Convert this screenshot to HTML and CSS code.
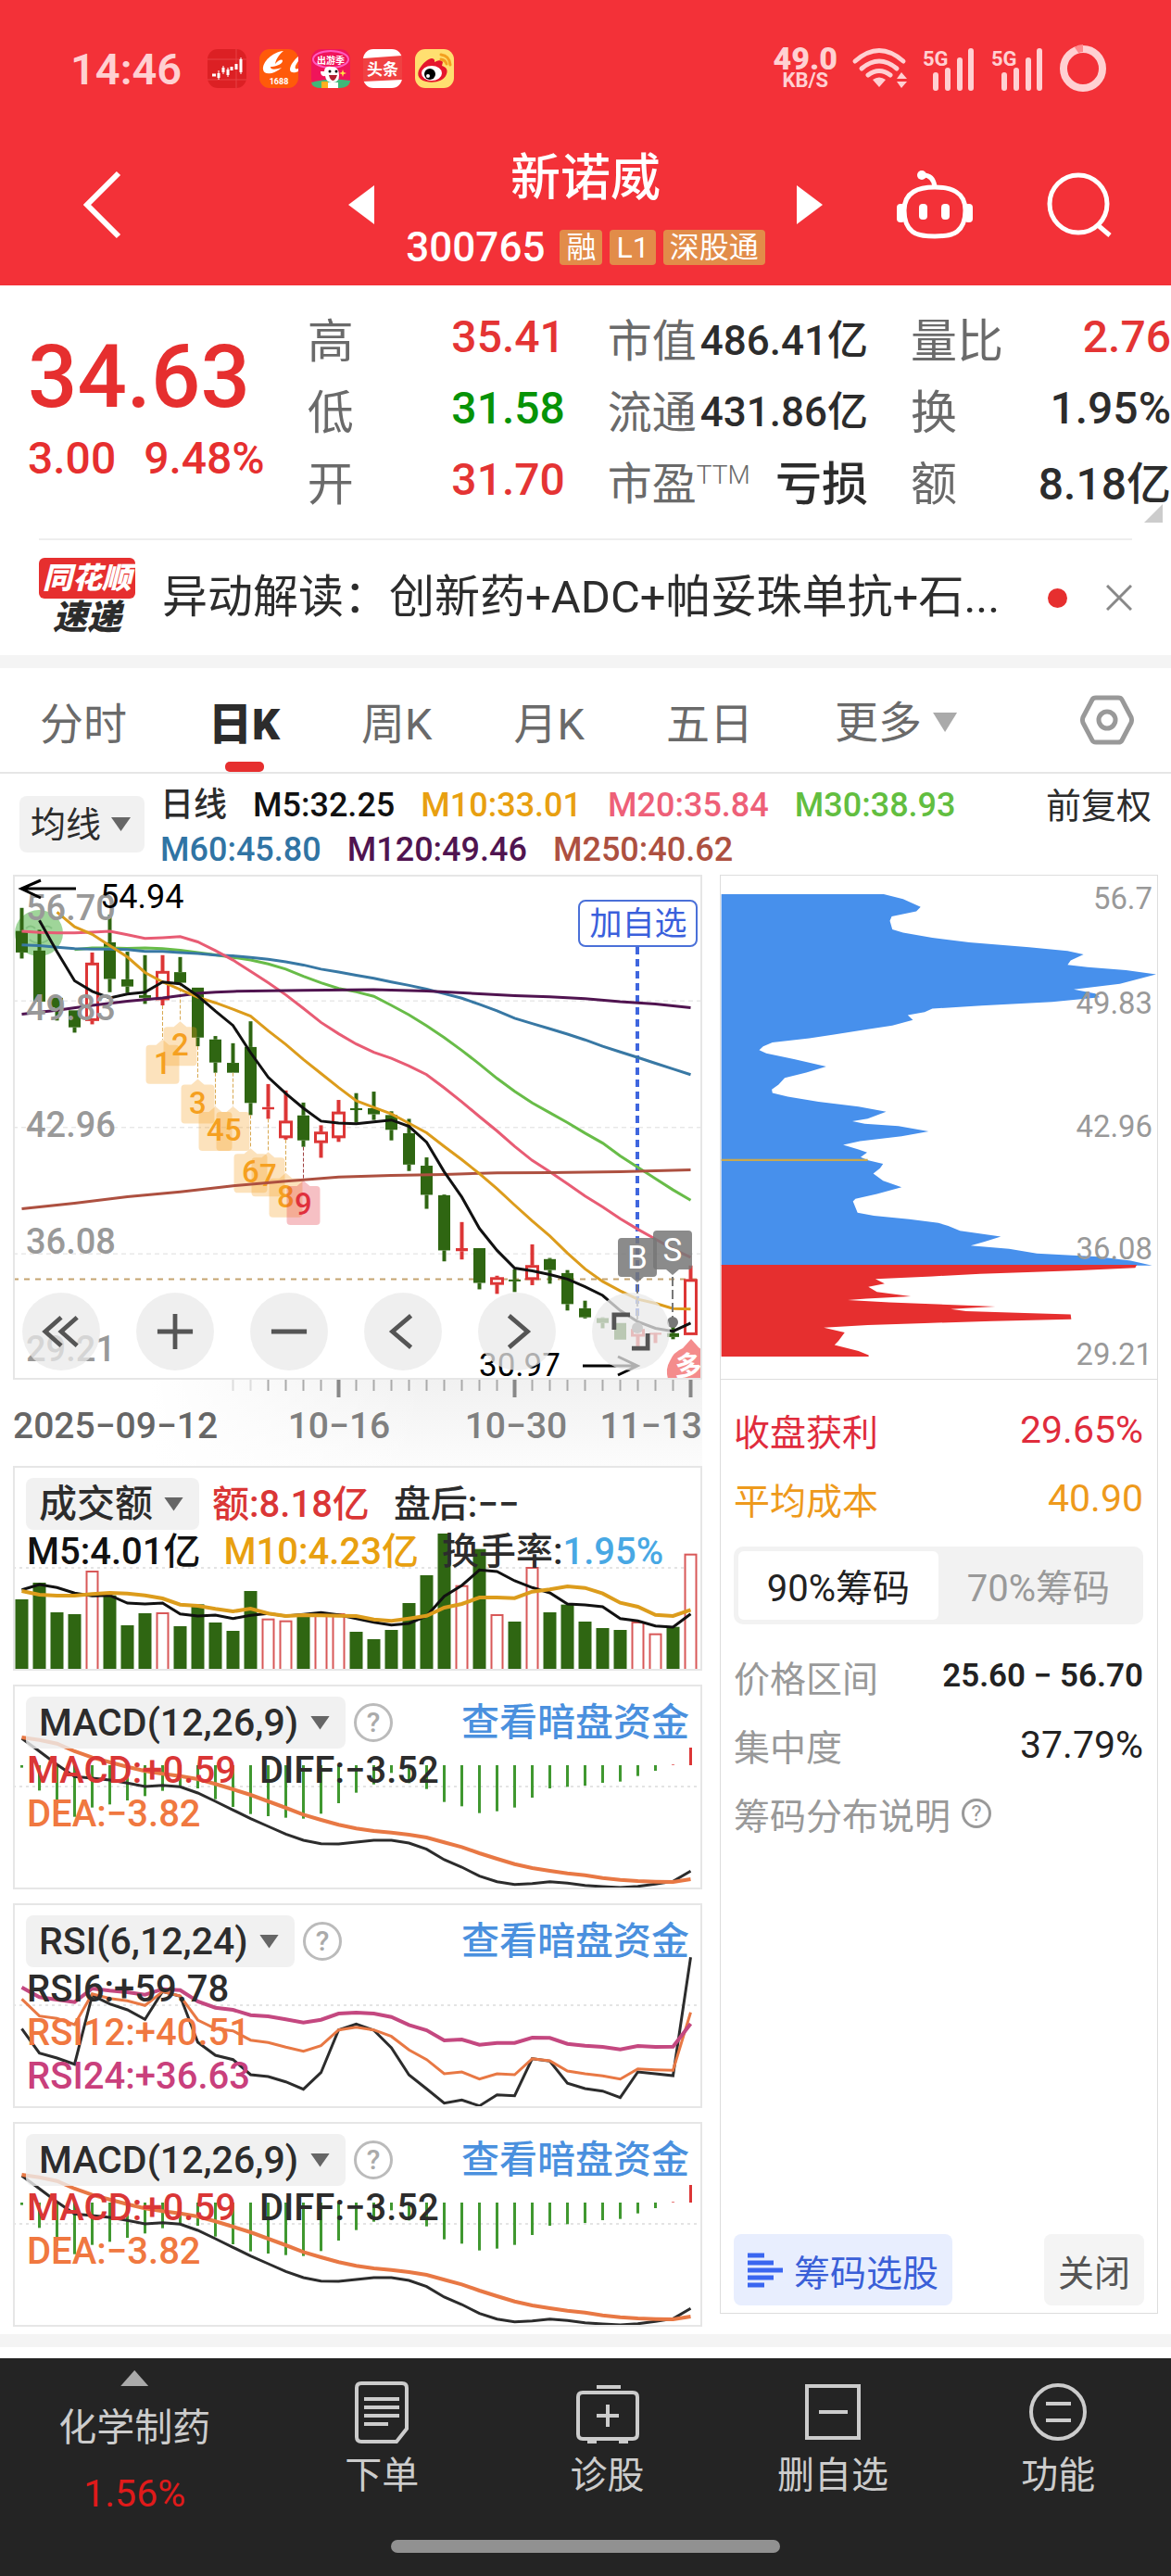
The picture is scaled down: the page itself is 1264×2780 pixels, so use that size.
FILE: index.html
```html
<!DOCTYPE html>
<html lang="zh-CN">
<head>
  <meta charset="UTF-8" />
  <title>新诺威 300765</title>
  <meta name="viewport" content="width=device-width, initial-scale=1" />
  <link rel="stylesheet" href="styles.css">
</head>
<body>

  <header class="header">
    <div class="status">
      <span class="clock">14:46</span>
      <div class="apps">
        <svg viewBox="0 0 42 42"><rect width="42" height="42" rx="11" fill="#dc2024"/><path d="M0 11h42M31 0v42M0 33h42" stroke="#e84044"/><path d="M5 28h4M12 26v5M17 20v5M22 22v6M26 19v4M31 16v6M36 11v14" stroke="#fff" stroke-width="3"/><path d="M12 23v10M17 18v9M22 20v10M36 9v18" stroke="#fff"/></svg>
        <svg viewBox="0 0 42 42"><rect width="42" height="42" rx="11" fill="#ff5a0a"/><path d="M26 2C14 3 3 14 4 22c1 7 12 5 20-2-6 2-12 3-12-1 4 0 12-2 13-6 0-3-5-1-8 3 1-6 6-12 9-14zM42 8c-5 4-9 10-9 14 0 4 5 4 9 2v-3c-3 1-4 0-3-3 1-2 2-4 3-5z" fill="#fff"/><text x="21" y="38" font-size="9" font-weight="700" text-anchor="middle" fill="#fff">1688</text></svg>
        <svg viewBox="0 0 42 42"><rect width="42" height="42" rx="11" fill="#f0145a"/><path d="M0 36q20-6 42-2v1q-2 7-11 7H11q-10 0-11-6z" fill="#3fb878"/><ellipse cx="21" cy="11" rx="19" ry="9" fill="none" stroke="#ff5cc0" stroke-width="2"/><text x="21" y="16" font-size="10" font-weight="700" text-anchor="middle" fill="#fff">出游季</text><path d="M14 24q0-6 8-5 8 0 8 9t-8 8q-6 0-7-7-5 1-5-5z" fill="#fff"/><path d="M17 36h12v6H17z" fill="#fff"/><path d="M19 28h9q-2 6-5 6-3-1-4-6z" fill="#b02030"/><circle cx="20" cy="24" r="1.5"/><circle cx="27" cy="24" r="1.5"/><path d="M11 35h7v7h-7z" fill="#ffb020"/><path d="m34 22 1 3 3 1-3 1-1 3-1-3-3-1 3-1z" fill="#ffe040"/></svg>
        <svg viewBox="0 0 42 42"><rect width="42" height="42" rx="11" fill="#fff"/><path d="M0 10l42-3v26L0 35z" fill="#f04142"/><text x="21" y="28" font-size="17" font-weight="700" text-anchor="middle" fill="#fff">头条</text></svg>
        <svg viewBox="0 0 42 42"><rect width="42" height="42" rx="11" fill="#ffdf70"/><path d="M18 10c4 0 3 4 3 4s7-4 9 0l-1 4c4 1 7 4 5 9-3 8-14 10-22 8C2 33 1 25 7 18c3-4 8-8 11-8z" fill="#e6162d"/><ellipse cx="18" cy="26" rx="11" ry="8" fill="#fff"/><circle cx="16" cy="27" r="6"/><circle cx="14" cy="29" r="2" fill="#fff"/><path d="M28 6q9 1 10 11M28 11q5 1 6 5" fill="none" stroke="#f4a020" stroke-width="3" stroke-linecap="round"/></svg>
      </div>
      <div class="signals">
        <div class="speed"><b>49.0</b><span>KB/S</span></div>
        <svg class="wifi" viewBox="0 0 60 42"><g fill="none" stroke="#ffd0d2" stroke-width="5" stroke-linecap="round"><path d="M3 13q26-23 52 0M10 21q19-16 38 0M17 28q12-9 24 0"/></g><path d="M22 33q7-5 14 0l-7 8zM48 32l5-7 6 7zM48 35h11l-6 7z" fill="#ffd0d2"/></svg>
        <svg class="cell" viewBox="0 0 58 44"><text x="0" y="19" font-size="22" font-weight="700">5G</text><path d="M14 43V29M27 43V24M40 43V13M52 43V3" stroke="#ffd0d2" stroke-width="6" stroke-linecap="round"/></svg>
        <svg class="cell" viewBox="0 0 58 44"><text x="0" y="19" font-size="22" font-weight="700">5G</text><path d="M14 43V29M27 43V24M40 43V13M52 43V3" stroke="#ffd0d2" stroke-width="6" stroke-linecap="round"/></svg>
        <svg class="ring" viewBox="0 0 50 50"><circle cx="25" cy="25" r="21" fill="none" stroke="#ffd0d2" stroke-width="8"/><path d="M18 5q3-2 7-2" stroke="#ff8a8e" stroke-width="8" fill="none"/></svg>
      </div>
    </div>

    <nav class="titlebar">
      <button class="back" aria-label="返回"><svg viewBox="0 0 42 74"><path d="M38 3 4 37l34 34" fill="none" stroke="#fff" stroke-width="6"/></svg></button>
      <div class="stock">
        <button class="step" aria-label="上一只"><svg viewBox="0 0 28 42"><path d="M28 0v42L0 21z" fill="#fff"/></svg></button>
        <div class="name">
          <h1>新诺威</h1>
          <p class="code">300765 <span class="tag">融</span><span class="tag">L1</span><span class="tag">深股通</span></p>
        </div>
        <button class="step" aria-label="下一只"><svg viewBox="0 0 28 42"><path d="M0 0v42l28-21z" fill="#fff"/></svg></button>
      </div>
      <div class="tools">
        <button class="robot" aria-label="问财"><svg viewBox="0 0 82 76"><g fill="none" stroke="#fff" stroke-width="5"><path d="M41 19q15 0 23 5 10 6 10 20 0 16-9 23-6 5-24 5t-24-5Q8 60 8 44q0-14 10-20 8-5 23-5z"/><path d="M27 6q12-1 14 12"/></g><circle cx="27" cy="6" r="5" fill="#fff"/><rect x="0" y="37" width="9" height="20" rx="4" fill="#fff"/><rect x="73" y="37" width="9" height="20" rx="4" fill="#fff"/><rect x="24" y="37" width="9" height="17" rx="4" fill="#fff"/><rect x="48" y="37" width="9" height="17" rx="4" fill="#fff"/></svg></button>
        <button class="search" aria-label="搜索"><svg viewBox="0 0 70 70"><g fill="none" stroke="#fff" stroke-width="5"><circle cx="34" cy="34" r="31"/><path d="m55 57 13 11"/></g></svg></button>
      </div>
    </nav>
  </header>

  <section class="quote">
    <div class="price">
      <strong>34.63</strong>
      <p><span>3.00</span><span>9.48%</span></p>
    </div>
    <dl>
      <div><dt>高</dt><dd class="up">35.41</dd></div>
      <div><dt>低</dt><dd class="down">31.58</dd></div>
      <div><dt>开</dt><dd class="up">31.70</dd></div>
    </dl>
    <dl class="tight">
      <div><dt>市值</dt><dd>486.41亿</dd></div>
      <div><dt>流通</dt><dd>431.86亿</dd></div>
      <div><dt>市盈<sup>TTM</sup></dt><dd class="loss">亏损</dd></div>
    </dl>
    <dl>
      <div><dt>量比</dt><dd class="up">2.76</dd></div>
      <div><dt>换</dt><dd>1.95%</dd></div>
      <div><dt>额</dt><dd>8.18亿</dd></div>
    </dl>
    <i class="corner"></i>
  </section>

  <section class="news">
    <div class="newslogo"><span>同花顺</span><b>速递</b></div>
    <a href="#">异动解读：创新药+ADC+帕妥珠单抗+石...</a>
    <i class="dot"></i>
    <button aria-label="关闭"><svg viewBox="0 0 28 28"><path d="m1 1 26 26M27 1 1 27" stroke="#888" stroke-width="3"/></svg></button>
  </section>

  <nav class="tabs">
    <button>分时</button>
    <button class="active">日K</button>
    <button>周K</button>
    <button>月K</button>
    <button>五日</button>
    <label class="more"><select aria-label="更多周期"><option>更多</option></select></label>
    <button class="setting" aria-label="设置"><svg viewBox="0 0 58 54"><g fill="none" stroke="#999" stroke-width="5"><path d="M17 3h24q3 0 4 2l10 19q1 3 0 6L45 49q-1 2-4 2H17q-3 0-4-2L3 30q-1-3 0-6L13 5q1-2 4-2z"/><circle cx="29" cy="27" r="9"/></g></svg></button>
  </nav>

  <section class="legend">
    <label class="picker"><select aria-label="主图指标"><option>均线</option></select></label>
    <div class="ma">
      <p><span>日线</span><span class="m5">M5:32.25</span><span class="m10">M10:33.01</span><span class="m20">M20:35.84</span><span class="m30">M30:38.93</span></p>
      <p><span class="m60">M60:45.80</span><span class="m120">M120:49.46</span><span class="m250">M250:40.62</span></p>
    </div>
    <button>前复权</button>
  </section>

  <main class="charts">
    <div class="left">
      <div class="kline">
        <svg id="kline" viewBox="0 0 744 545"></svg>
        <div class="controls">
          <button aria-label="展开"><svg viewBox="0 0 44 44"><path d="M22 6 4 22l18 16M40 6 22 22l18 16"/></svg></button>
          <button aria-label="放大"><svg viewBox="0 0 44 44"><path d="M2 22h40M22 2v40"/></svg></button>
          <button aria-label="缩小"><svg viewBox="0 0 44 44"><path d="M2 22h40"/></svg></button>
          <button aria-label="左移"><svg viewBox="0 0 44 44"><path d="M31 4 10 22l21 18"/></svg></button>
          <button aria-label="右移"><svg viewBox="0 0 44 44"><path d="m13 4 21 18-21 18"/></svg></button>
          <button aria-label="全屏"><svg viewBox="0 0 44 44"><path d="M3 20V3h18M41 24v17H23"/></svg></button>
        </div>
      </div>
      <svg id="axis" class="axis" viewBox="0 0 744 93"></svg>

      <div class="panel">
        <svg id="volume" viewBox="0 0 744 221"></svg>
        <div class="info">
          <div class="row"><label class="picker"><select aria-label="副图一"><option>成交额</option></select></label><span class="red">额:8.18亿</span><span>盘后:−−</span></div>
          <p><span class="m5">M5:4.01亿</span><span class="m10">M10:4.23亿</span><span>换手率:<em>1.95%</em></span></p>
        </div>
      </div>

      <div class="panel">
        <svg class="macd" viewBox="0 0 744 221"></svg>
        <div class="info">
          <div class="row"><label class="picker"><select aria-label="副图二"><option>MACD(12,26,9)</option></select></label><button class="help">?</button><a href="#">查看暗盘资金</a></div>
          <p><span class="red">MACD:+0.59</span><span>DIFF:−3.52</span></p>
          <p><span class="orange">DEA:−3.82</span></p>
        </div>
      </div>

      <div class="panel">
        <svg id="rsi" viewBox="0 0 744 221"></svg>
        <div class="info">
          <div class="row"><label class="picker"><select aria-label="副图三"><option>RSI(6,12,24)</option></select></label><button class="help">?</button><a href="#">查看暗盘资金</a></div>
          <p><span>RSI6:+59.78</span></p>
          <p><span class="orange">RSI12:+40.51</span></p>
          <p><span class="pink">RSI24:+36.63</span></p>
        </div>
      </div>

      <div class="panel">
        <svg class="macd" viewBox="0 0 744 221"></svg>
        <div class="info">
          <div class="row"><label class="picker"><select aria-label="副图四"><option>MACD(12,26,9)</option></select></label><button class="help">?</button><a href="#">查看暗盘资金</a></div>
          <p><span class="red">MACD:+0.59</span><span>DIFF:−3.52</span></p>
          <p><span class="orange">DEA:−3.82</span></p>
        </div>
      </div>
    </div>

    <aside class="chips">
      <svg viewBox="0 0 473 545">
        <g transform="scale(.3333 .4082) translate(-52 -35)">
          <path fill="#4790ec" d="M54 84H582L645 97 702 118 688 130 608 143 602 155 610 178 645 186 740 200 860 212 1055 225 1180 235 1232 244 1190 260 1180 272 1245 278 1370 286 1468 297 1350 322 1200 337 1270 348 1285 358 1130 370 900 380 740 388 715 397 660 405 677 418 610 433 530 443 420 457 340 467 220 478 190 488 177 498 200 507 290 522 395 542 330 558 260 572 240 590 218 603 220 612 270 622 370 635 500 648 590 662 530 680 480 687 520 694 630 700 728 714 640 727 505 740 450 750 500 762 528 770 507 782 532 791 580 800 570 812 548 826 580 845 640 862 560 880 490 893 482 900 497 930 550 938 665 947 760 957 792 965 830 978 963 993 910 1007 865 1017 990 1026 1080 1038 1280 1047 1385 1057 1455 1070H54z"/>
          <path fill="#e62f2f" d="M54 1068H1405L1400 1076 1220 1083 1050 1088 895 1092 740 1099 555 1106 585 1118 532 1127 560 1140 670 1152 525 1158 465 1162 600 1168 945 1179 800 1186 850 1191 1040 1196 1190 1200 1192 1213 935 1218 715 1223 530 1228 387 1235 455 1248 435 1270 422 1281 500 1297 533 1308V1312H54z"/>
          <path d="M54 790H530" stroke="#c8a850" stroke-width="5"/>
        </g>
        <g class="scale" text-anchor="end">
          <text x="468" y="36">56.7</text><text x="468" y="150">49.83</text><text x="468" y="283">42.96</text><text x="468" y="416">36.08</text><text x="468" y="530">29.21</text>
        </g>
      </svg>
      <div class="chipinfo">
        <p class="profit"><span>收盘获利</span><span class="num">29.65%</span></p>
        <p class="cost"><span>平均成本</span><span class="num">40.90</span></p>
        <div class="segment"><button class="on">90%筹码</button><button>70%筹码</button></div>
        <p><span>价格区间</span><b>25.60 − 56.70</b></p>
        <p><span>集中度</span><span class="num dark">37.79%</span></p>
        <p class="explain"><span>筹码分布说明</span><button class="help">?</button></p>
      </div>
      <div class="chipfoot">
        <button class="pick"><svg viewBox="0 0 38 38"><path d="M0 3h18M0 11h28M0 19h38M0 27h28M0 35h18" stroke="#3a66f0" stroke-width="5"/></svg>筹码选股</button>
        <button class="close">关闭</button>
      </div>
    </aside>
  </main>

  <div class="strip"></div>

  <footer class="bottom">
    <nav>
      <a class="sector" href="#"><i></i><span>化学制药</span><b>1.56%</b></a>
      <a href="#"><svg viewBox="0 0 70 70"><g fill="none" stroke="#ccc" stroke-width="4"><path d="M13 4h44q5 0 5 5v44L51 67H13q-5 0-5-5V9q0-5 5-5z"/><path d="M16 21h38M16 30h38M16 39h38M16 48h26"/></g></svg>下单</a>
      <a href="#"><svg viewBox="0 0 70 70"><g fill="none" stroke="#ccc" stroke-width="4"><path d="M23 8h26M8 14h54q5 0 5 5v40q0 5-5 5H8q-5 0-5-5V19q0-5 5-5zM13 67h10M47 67h10M35 27v24M23 39h24"/></g></svg>诊股</a>
      <a href="#"><svg viewBox="0 0 70 70"><path d="M7 7h56v56H7zM20 35h31" fill="none" stroke="#ccc" stroke-width="4"/></svg>删自选</a>
      <a href="#"><svg viewBox="0 0 70 70"><g fill="none" stroke="#ccc" stroke-width="4"><circle cx="35" cy="35" r="29"/><path d="M22 26h27M22 44h27"/></g></svg>功能</a>
    </nav>
    <div class="homebar"></div>
  </footer>

  <script src="script.js"></script>
</body>
</html>
```
FILE: styles.css
```css
:root {
  --red: #e43434;
  --dark: #2c2c2c;
  --gray: #6a6a6a;
  --line: #e6e6e6;
  --soft: #f2f2f2;
}
* {
  box-sizing: border-box;
}
body {
  margin: 0;
  background: #fff;
  color: var(--dark);
  font-family: Roboto, "Noto Sans CJK SC", sans-serif;
}
p, h1, dl, dd {
  margin: 0;
}
button, select {
  font: inherit;
  color: inherit;
  background: none;
  border: none;
  padding: 0;
}
select {
  appearance: none;
}
a {
  color: inherit;
  text-decoration: none;
}
svg {
  display: block;
}

/* header */
.header {
  background: #f33138;
  color: #fff;
}
.status {
  display: flex;
  align-items: center;
  height: 150px;
  padding: 0 70px 2px 76px;
  color: #ffd0d2;
}
.clock {
  font-size: 47px;
  font-weight: 600;
}
.apps {
  display: flex;
  gap: 14px;
  margin-left: 28px;
}
.apps svg {
  width: 42px;
  height: 42px;
}
.signals {
  display: flex;
  align-items: center;
  gap: 16px;
  margin-left: auto;
}
.signals svg {
  overflow: visible;
}
.speed {
  text-align: center;
  font-weight: 700;
}
.speed b, .speed span {
  display: block;
}
.speed b {
  font-size: 34px;
  line-height: 26px;
}
.speed span {
  font-size: 22px;
  line-height: 22px;
}
.wifi {
  width: 60px;
}
.cell {
  width: 58px;
  fill: #ffd0d2;
}
.ring {
  width: 50px;
}
.titlebar {
  display: grid;
  grid-template-columns: 1fr auto 1fr;
  align-items: center;
  height: 158px;
  padding: 0 64px;
}
.back, .step, .tools {
  margin-bottom: 16px;
}
.back {
  width: 42px;
  margin-left: 26px;
}
.stock {
  display: flex;
  align-items: center;
  gap: 34px;
  text-align: center;
}
.step {
  width: 28px;
}
.name {
  padding-top: 8px;
}
h1 {
  font-size: 54px;
  line-height: 68px;
  font-weight: 500;
}
.code {
  display: flex;
  align-items: center;
  gap: 8px;
  font-size: 44px;
  line-height: 80px;
  font-weight: 500;
}
.tag {
  background: #e28c49;
  border-radius: 4px;
  padding: 0 7px;
  font-size: 32px;
  line-height: 38px;
  font-weight: 400;
}
.code .tag:first-of-type {
  margin-left: 8px;
}
.tools {
  display: flex;
  align-items: center;
  justify-content: flex-end;
  gap: 80px;
}
.robot {
  width: 82px;
}
.search {
  width: 70px;
}

/* quote */
.quote {
  position: relative;
  display: grid;
  grid-template-columns: 251fr 279fr 282fr 282fr;
  gap: 46px;
  margin-left: 30px;
  padding: 17px 0 25px;
}
.price {
  color: #e62f2f;
  padding-top: 32px;
}
.price strong {
  display: block;
  font-size: 94px;
  line-height: 100px;
  font-weight: 500;
}
.price p {
  display: flex;
  gap: 30px;
  font-size: 48px;
  line-height: 76px;
  font-weight: 500;
  white-space: nowrap;
}
.quote dl div {
  display: flex;
  justify-content: space-between;
  align-items: center;
  height: 77px;
  white-space: nowrap;
}
dt {
  color: var(--gray);
  font-size: 50px;
}
dd {
  font-size: 48px;
  font-weight: 500;
}
.tight dt {
  font-size: 48px;
}
.tight dd {
  font-size: 44px;
}
.tight .loss {
  font-size: 50px;
}
sup {
  font-size: 28px;
  line-height: 28px;
  font-weight: 300;
}
.up {
  color: var(--red);
}
.down {
  color: #079307;
}
.corner {
  position: absolute;
  right: 9px;
  bottom: 17px;
  width: 20px;
  height: 20px;
  background: #ccc;
  clip-path: polygon(100% 0, 100% 100%, 0 100%);
}

/* news */
.news {
  display: flex;
  align-items: center;
  height: 126px;
  margin: 0 42px;
  border-top: 2px solid #eee;
}
.newslogo {
  width: 104px;
  text-align: center;
  font-style: italic;
  font-weight: 900;
}
.newslogo span {
  display: block;
  background: #e62f2f;
  color: #fff;
  border-radius: 6px;
  font-size: 32px;
  line-height: 44px;
}
.newslogo b {
  display: block;
  font-size: 37px;
  line-height: 42px;
  font-weight: 900;
}
.news a {
  flex: 1;
  margin-left: 29px;
  font-size: 49px;
  line-height: 72px;
  overflow: hidden;
  white-space: nowrap;
  text-overflow: ellipsis;
}
.dot {
  width: 21px;
  height: 21px;
  margin: 0 42px 0 30px;
  border-radius: 50%;
  background: #e62f2f;
}
.news button {
  width: 28px;
}

/* period tabs */
.tabs {
  display: flex;
  align-items: center;
  gap: 88px;
  height: 128px;
  padding: 0 40px 0 43px;
  border-top: 14px solid #f4f4f4;
  border-bottom: 2px solid var(--line);
  font-size: 47px;
  color: var(--gray);
}
.tabs .active {
  position: relative;
  color: #2c2c2c;
  font-weight: 900;
}
.active::after {
  content: "";
  position: absolute;
  left: 50%;
  bottom: -21px;
  width: 42px;
  height: 11px;
  margin-left: -21px;
  border-radius: 5px;
  background: #e62f2f;
}
.more {
  display: flex;
  align-items: center;
  gap: 12px;
  padding-top: 5px;
}
.more::after {
  content: "";
  width: 26px;
  height: 21px;
  background: #aaa;
  clip-path: polygon(0 0, 100% 0, 50% 100%);
}
.setting {
  width: 58px;
  margin-left: auto;
}

/* moving averages */
.picker {
  display: inline-flex;
  align-items: center;
  gap: 12px;
  height: 56px;
  padding: 0 17px 0 14px;
  border-radius: 8px;
  background: rgba(238, 238, 238, 0.8);
  font-size: 41px;
}
.picker::after {
  content: "";
  width: 21px;
  height: 15px;
  background: #666;
  clip-path: polygon(0 0, 100% 0, 50% 100%);
}
.legend {
  display: flex;
  align-items: flex-start;
  height: 109px;
  padding: 10px 21px 0;
  white-space: nowrap;
}
.legend .picker {
  height: 61px;
  margin-top: 14px;
  padding: 0 15px 0 12px;
  gap: 10px;
  font-size: 38px;
}
.ma {
  flex: 1;
  margin-left: 17px;
  font-size: 36px;
  font-weight: 500;
  line-height: 48px;
}
.ma p {
  display: flex;
  gap: 28px;
}
.legend > button {
  font-size: 38px;
  line-height: 50px;
}
.m5 { color: #111; }
.m10 { color: #e8a010; }
.m20 { color: #ee6078; }
.m30 { color: #62be40; }
.m60 { color: #3074a4; }
.m120 { color: #501450; }
.m250 { color: #ad5040; }
.red { color: #da3636; }
.orange { color: #f07840; }
.pink { color: #c9407c; }

/* charts */
.charts {
  display: grid;
  grid-template-columns: 744fr 473fr;
  gap: 19px;
  padding: 0 14px 8px;
}
.kline {
  position: relative;
}
.kline > svg, .panel > svg, .axis, .chips > svg {
  width: 100%;
}
.kline > svg, .panel > svg {
  outline: 2px solid var(--line);
  outline-offset: -2px;
}
.controls {
  position: absolute;
  left: 0;
  right: 0;
  bottom: 10px;
  display: flex;
  justify-content: space-between;
  padding: 0 35px 0 10px;
}
.controls button {
  width: 84px;
  height: 84px;
  border-radius: 50%;
  background: rgba(233, 233, 233, 0.75);
}
.controls svg {
  width: 42px;
  margin: auto;
  fill: none;
  stroke: #555;
  stroke-width: 5;
}
.axis {
  background: linear-gradient(90deg, #fff 20%, transparent 60%), linear-gradient(#f1f1f1, #fcfcfc);
}
.panel {
  display: grid;
  margin-bottom: 15px;
}
.panel:last-child {
  margin-bottom: 0;
}
.panel > * {
  grid-area: 1 / 1;
}
.info {
  z-index: 1;
  padding: 13px 14px 0;
  font-size: 40px;
  font-weight: 500;
  line-height: 47px;
  white-space: nowrap;
}
.row {
  display: flex;
  align-items: center;
  height: 56px;
}
.row .red {
  margin: 0 26px 0 14px;
}
.row a {
  margin-left: auto;
  font-size: 41px;
  color: #4a90de;
}
.row .help {
  margin-left: 9px;
}
.info p {
  display: flex;
  gap: 25px;
  padding-left: 1px;
}
.info em {
  font-style: normal;
  color: #48a8e4;
}
.help {
  width: 42px;
  height: 42px;
  border: 3px solid #bbb;
  border-radius: 50%;
  color: #aaa;
  font-size: 30px;
  line-height: 34px;
}

/* chip distribution */
.chips {
  display: flex;
  flex-direction: column;
  margin-bottom: 14px;
  border: 1px solid #ddd;
}
.chips > svg {
  border-bottom: 1px solid #ddd;
}
.scale {
  font-size: 33px;
  fill: #999;
}
.chipinfo {
  padding: 17px 15px 0 14px;
  font-size: 39px;
}
.chipinfo p {
  display: flex;
  align-items: center;
  justify-content: space-between;
  height: 74px;
  color: #999;
}
.chipinfo .profit {
  color: #e02c3c;
}
.chipinfo .cost {
  color: #ee9a1c;
}
.chipinfo b {
  font-size: 35px;
  font-weight: 600;
  color: #222;
}
.chipinfo .num {
  font-size: 41px;
}
.chipinfo .dark {
  color: #222;
}
.segment {
  display: grid;
  grid-template-columns: 1fr 1fr;
  height: 84px;
  margin: 15px 0 19px;
  padding: 5px;
  border-radius: 10px;
  background: var(--soft);
  color: #999;
  font-size: 40px;
}
.segment .on {
  border-radius: 6px;
  background: #fff;
  color: #222;
}
.chipinfo .explain {
  justify-content: flex-start;
  gap: 12px;
}
.explain .help {
  width: 32px;
  height: 32px;
  border-color: #999;
  color: #999;
  font-size: 24px;
  line-height: 26px;
}
.chipfoot {
  display: flex;
  justify-content: space-between;
  margin-top: auto;
  padding: 0 14px 8px;
  font-size: 39px;
}
.chipfoot button {
  display: flex;
  align-items: center;
  gap: 12px;
  height: 77px;
  padding: 0 15px;
  border-radius: 8px;
  background: #f4f4f4;
  color: #555;
}
.chipfoot .pick {
  background: #e8eefe;
  color: #3a5fd8;
}
.pick svg {
  width: 38px;
}

/* bottom bar */
.strip {
  height: 26px;
  border-bottom: 12px solid #fff;
  background: #f4f4f4;
}
.bottom {
  height: 235px;
  background: #242424;
  color: #ccc;
}
.bottom nav {
  display: grid;
  grid-template-columns: 290fr 243fr 243fr 243fr 243fr;
  height: 196px;
  font-size: 40px;
  line-height: 60px;
}
.bottom a {
  display: flex;
  flex-direction: column;
  align-items: center;
  padding-top: 23px;
}
.bottom a svg {
  width: 70px;
  margin-bottom: 4px;
}
.bottom .sector {
  padding-top: 13px;
  font-size: 41px;
}
.sector i {
  width: 30px;
  height: 17px;
  margin-bottom: 15px;
  background: #aaa;
  clip-path: polygon(50% 0, 100% 100%, 0 100%);
}
.sector b {
  margin-top: 11px;
  font-weight: 400;
  color: #e01a1a;
}
.homebar {
  width: 420px;
  height: 14px;
  margin: 0 auto;
  border-radius: 7px;
  background: #919191;
}
```
FILE: script.js
```javascript
const GREEN = "#2f6612";
const RED = "#dc3636";
const LAST = 38;

// x of the n-th trading day, all charts share it
const dayX = i => 9.5 + i * 19;
// price scale steps to chart px
const priceY = v => v * 0.408 - 14;
const volY = v => v / 3 - 12;
const macdY = v => v / 3 - 248;
const rsiY = v => v / 3 - 14;

function rect(x, y, w, h, fill, stroke, sw) {
  return `<rect x="${x}" y="${y}" width="${w}" height="${Math.max(h, 2)}" fill="${fill}"` +
    (stroke ? ` stroke="${stroke}" stroke-width="${sw}"` : "") + "/>";
}
function seg(x1, y1, x2, y2, color, w, dash) {
  return `<path d="M${x1} ${y1}L${x2} ${y2}" stroke="${color}" stroke-width="${w}"` +
    (dash ? ` stroke-dasharray="${dash}"` : "") + "/>";
}
function text(x, y, size, color, str, extra = "") {
  return `<text x="${x}" y="${y}" font-size="${size}" fill="${color}" ${extra}>${str}</text>`;
}
// values: one per day, starting at day "from"
function curve(values, from, scale, color, w = 4) {
  const pts = values.map((v, i) => dayX(from + i) + "," + scale(v).toFixed(1)).join(" ");
  return `<polyline points="${pts}" fill="none" stroke="${color}" stroke-width="${w}"/>`;
}
// pairs: [day, value]
function sparse(pairs, scale, color) {
  const pts = pairs.map(p => dayX(p[0]) + "," + scale(p[1]).toFixed(1)).join(" ");
  return `<polyline points="${pts}" fill="none" stroke="${color}" stroke-width="3"/>`;
}

// up?, high, body top, body bottom, low
const candles = [
  [0,122,183,240,256],[0,180,235,370,370],[0,355,360,385,420],[0,393,393,438,452],[1,240,268,420,430],
  [0,140,213,310,345],[0,238,311,330,347],[0,247,353,360,376],[1,247,290,365,380],[0,252,292,320,320],
  [0,333,333,465,488],[0,461,470,531,558],[0,480,532,558,558],[0,422,490,638,670],[1,588,649,655,680],
  [1,605,686,730,735],[0,637,671,737,754],[1,697,715,743,783],[1,630,662,730,741],[0,612,652,656,690],
  [0,608,652,668,683],[0,660,670,709,737],[0,680,718,801,818],[0,782,804,881,918],[0,880,882,1028,1057],
  [1,953,1022,1030,1052],[0,1022,1022,1114,1131],[1,1095,1100,1118,1143],[0,1078,1105,1109,1138],
  [1,1012,1068,1105,1120],[0,1048,1051,1080,1116],[0,1080,1088,1170,1187],[0,1161,1181,1205,1208],
  [0,1205,1207,1220,1234],[0,1220,1220,1264,1264],[1,1235,1237,1255,1283],[1,1245,1246,1250,1273],
  [0,1220,1247,1257,1263],[1,1068,1105,1251,1251]
];
const ma5 = [155,238,315,343,360,350,345,318,323,355,395,433,505,570,613,652,686,691,693,688,683,700,742,820,887,970,1028,1075,1082,1092,1104,1124,1147,1187,1217,1234,1242,1220];
const ma10 = [133,172,192,222,252,293,318,338,358,373,390,408,447,483,523,560,597,632,650,667,692,717,753,788,825,865,908,950,990,1035,1077,1110,1135,1157,1168,1182,1183];
const ma20 = [184,187,188,188,186,184,193,203,201,198,212,235,260,290,320,352,388,425,455,482,504,520,540,563,598,635,674,712,753,790,820,852,884,913,944,972,998,1024,1046];
const ma30 = [232,228,228,229,228,230,234,240,246,253,260,270,284,303,320,335,344,356,380,405,434,465,499,535,573,607,638,664,690,718,744,778,808,838,868,895];
const ma60 = [220,222,226,230,231,231,232,237,237,240,243,247,249,253,258,265,273,284,292,300,308,318,327,337,349,361,377,394,414,428,442,456,471,488,503,518,533,548,563];
const ma120 = [[0,403],[2,393],[4,380],[6,369],[8,360],[10,348],[11,345],[12,343],[16,340],[20,338],[23,342],[26,349],[28,354],[30,357],[32,362],[34,370],[36,376],[38,386]];
const ma250 = [[0,918],[3,903],[6,886],[9,873],[12,857],[15,845],[18,834],[21,830],[24,827],[27,823],[30,822],[34,820],[38,815]];

function drawKline() {
  let s = "";
  [368, 703, 1037].forEach(v => s += seg(0, priceY(v), 744, priceY(v), "#ddd", 1, "5 4"));
  s += seg(0, priceY(1104), 744, priceY(1104), "#c4a470", 2, "6 6");

  // mood face
  s += `<g opacity=".75"><ellipse cx="28" cy="63" rx="26" ry="25" fill="#7fc878"/><path d="M14 58q5-5 10 0M32 58q5-5 10 0M18 70q10 8 20 0" fill="none" stroke="#5cae58" stroke-width="2"/></g>`;
  s += `<circle cx="47" cy="138" r="6" fill="${GREEN}"/>`;

  s += seg(674, 78, 674, 476, "#3f66de", 4, "8 5");

  candles.forEach(([up, hi, top, bot, lo], i) => {
    const x = dayX(i), y1 = priceY(top), y2 = priceY(bot);
    const color = up ? RED : GREEN;
    s += seg(x, priceY(hi), x, y1, color, 4) + seg(x, y2, x, priceY(lo), color, 4);
    if (up && bot - top > 12) s += rect(x - 6, y1 + 1, 12, y2 - y1 - 2, "#fff", color, 3);
    else s += rect(x - 6.5, y1, 13, y2 - y1, color);
  });

  // nine-turn marks
  [470,422,575,647,647,758,768,823,843].forEach((v, i) => {
    const x = dayX(8 + i), y = priceY(v), nine = i === 8;
    const c = nine ? "#e0303c" : "#f5a020";
    s += seg(x, priceY(candles[8 + i][4]), x, y, nine ? "#a04040" : "#d8a850", 1, "4 2");
    s += `<path d="M${x} ${y}l7 6h7q4 0 4 4v34q0 4-4 4h-28q-4 0-4-4v-34q0-4 4-4h7z" fill="${c}" opacity=".3"/>`;
    s += text(x, y + 37, 33, c, i + 1, 'text-anchor="middle" font-weight="500"');
  });

  s += curve(ma30, 3, priceY, "#68bc48", 3) + curve(ma60, 0, priceY, "#3878a4", 3) + curve(ma20, 0, priceY, "#e85c74", 3);
  s += sparse(ma120, priceY, "#501450") + sparse(ma250, priceY, "#ad5040");
  s += curve(ma10, 2, priceY, "#dc9c1c", 3) + curve(ma5, 1, priceY, "#111", 3);

  [["56.70", 49], ["49.83", 157], ["42.96", 283], ["36.08", 409], ["29.21", 525]].forEach(([t, y]) => {
    s += text(14, y, 38, "#999", t, 'font-weight="500"');
  });
  s += text(94, 36, 36, "#000", "54.94") + `<path d="M68 15H10M30 6 9 15l21 10" fill="none" stroke="#000" stroke-width="3"/>`;
  s += text(503, 541, 35, "#000", "30.97") + `<path d="M615 530h58M653 520l21 10-21 10" fill="none" stroke="#000" stroke-width="3"/>`;

  s += `<rect x="611" y="28" width="127" height="49" rx="7" fill="#fff" stroke="#4a70d8" stroke-width="2"/>`;
  s += text(675, 65, 35, "#3a60dc", "加自选", 'text-anchor="middle"');

  // buy / sell flags
  [["B", 674, 392, 489], ["S", 712, 384, 483]].forEach(([t, x, y, end]) => {
    s += seg(x, y + 50, x, end, "#777", 2, "10 4") + `<circle cx="${x}" cy="${end}" r="6" fill="#777"/>`;
    s += `<path d="M${x - 17} ${y}h34q4 0 4 4v34q0 4-4 4h-10l-7 6-7-6h-10q-4 0-4-4v-34q0-4 4-4z" fill="#777" opacity=".85"/>`;
    s += text(x, y + 33, 35, "#fff", t, 'text-anchor="middle"');
  });

  s += `<path d="M732 501l8 9 4 3v31h-37q-3-11 2-19 4-10 14-14z" fill="#f48c8c"/>`;
  s += text(729, 541, 29, "#fff", "多", 'text-anchor="middle" font-weight="700"');
  document.getElementById("kline").innerHTML = s;
}

function drawAxis() {
  let s = "";
  for (let i = 12; i <= LAST; i++) {
    const major = i === 18 || i === 28 || i === LAST;
    const color = i < 14 ? "#ddd" : major ? "#888" : "#aaa";
    s += seg(dayX(i), 0, dayX(i), major ? 19 : 12, color, major ? 4 : 2);
  }
  s += text(0, 63, 39, "#666", "2025−09−12", 'font-weight="500"');
  s += text(352, 63, 39, "#808080", "10−16", 'text-anchor="middle" font-weight="500"');
  s += text(543, 63, 39, "#808080", "10−30", 'text-anchor="middle" font-weight="500"');
  s += text(744, 63, 39, "#808080", "11−13", 'text-anchor="end" font-weight="500"');
  document.getElementById("axis").innerHTML = s;
}

function drawVolume() {
  const bars = [468,414,510,516,375,455,552,513,510,555,484,543,570,441,530,536,522,515,513,573,597,567,480,390,255,422,305,516,540,363,510,485,540,561,567,540,578,557,320];
  const ups = [4,8,14,15,17,18,25,27,29,35,36,38];
  const m5 = [437,420,430,448,457,455,480,483,480,515,522,519,530,520,514,522,517,511,518,530,542,551,546,522,458,423,373,378,408,430,447,483,486,492,530,538,554,558,515];
  const m10 = [441,453,456,456,451,447,449,455,465,485,489,499,507,498,514,522,519,520,521,522,533,538,530,521,495,483,462,462,464,443,436,426,431,449,479,492,518,522,502];
  let s = seg(0, 110, 744, 110, "#e4e4e4", 2, "3 4");
  bars.forEach((v, i) => {
    const y = volY(v);
    if (ups.includes(i)) s += rect(dayX(i) - 6, y + 1, 12, 219 - y, "#fff", "#d85858", 2);
    else s += rect(dayX(i) - 7, y, 14, 221 - y, GREEN);
  });
  s += curve(m5, 0, volY, "#111", 3) + curve(m10, 0, volY, "#dc9c1c");
  document.getElementById("volume").innerHTML = s;
}

function drawMacd(el) {
  const hist = [1013,1087,1145,1172,1142,1132,1119,1105,1088,1072,1080,1115,1140,1163,1170,1175,1178,1162,1128,1094,1067,1030,1063,1082,1124,1138,1160,1154,1142,1110,1080,1075,1071,1062,1058,1040,1023,1003,948];
  const diff = [918,960,1003,1042,1047,1053,1063,1074,1070,1075,1095,1122,1150,1178,1203,1228,1248,1259,1260,1254,1248,1248,1257,1277,1311,1335,1364,1382,1391,1388,1382,1387,1394,1398,1401,1397,1390,1381,1348];
  const dea = [915,923,935,960,980,995,1010,1024,1033,1040,1050,1066,1083,1101,1122,1143,1165,1182,1198,1210,1218,1223,1230,1239,1255,1270,1290,1308,1325,1338,1347,1355,1361,1370,1376,1380,1382,1383,1374];
  let s = seg(0, 110, 744, 110, "#e4e4e4", 2, "3 4");
  hist.forEach((v, i) => {
    s += seg(dayX(i), 87, dayX(i), macdY(v), v < 1005 ? RED : "#409830", 3);
  });
  s += curve(diff, 0, macdY, "#2c2c2c", 3) + curve(dea, 0, macdY, "#e87844");
  el.innerHTML = s;
}

function drawRsi() {
  const r6 = [448,527,543,563,340,368,387,418,328,343,492,534,548,597,603,620,644,590,452,433,453,510,598,643,689,679,698,662,665,545,553,625,642,650,671,588,594,600,217];
  const r12 = [352,407,415,435,335,350,358,373,328,342,420,448,455,485,493,508,521,503,452,443,452,473,517,548,594,588,611,594,597,545,552,585,594,601,611,578,581,583,395];
  const r24 = [314,346,354,362,318,325,330,338,320,323,360,380,387,404,408,418,428,419,399,396,399,410,436,453,486,483,500,494,494,477,478,497,503,507,515,504,507,506,432];
  document.getElementById("rsi").innerHTML = seg(0, 110, 744, 110, "#e4e4e4", 2, "3 4") +
    curve(r6, 0, rsiY, "#2c2c2c", 3) + curve(r12, 0, rsiY, "#e87844", 3) + curve(r24, 0, rsiY, "#c44880");
}

drawKline();
drawAxis();
drawVolume();
document.querySelectorAll(".macd").forEach(drawMacd);
drawRsi();
```
